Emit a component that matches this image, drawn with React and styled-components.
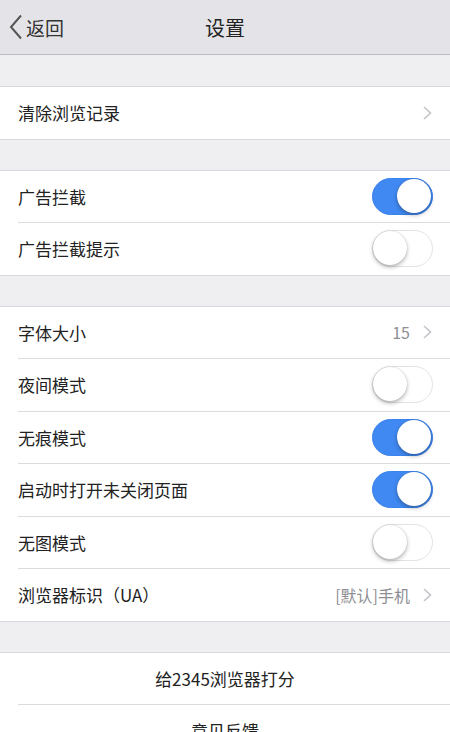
import styled, { createGlobalStyle } from "styled-components";

const GlobalStyle = createGlobalStyle`
  body {
    margin: 0;
    background: #efeff1;
    font-family: "Noto Sans CJK SC", "Liberation Sans", sans-serif;
  }
`;

const Page = styled.div`
  width: 450px;
  height: 732px;
  overflow: hidden;
  background: #efeff1;
`;

const NavBar = styled.div`
  height: 54px;
  display: grid;
  grid-template-columns: 1fr auto 1fr;
  align-items: center;
  background: #e4e4e8;
  border-bottom: 1px solid #bdbdc2;
`;

const Back = styled.div`
  display: flex;
  align-items: center;
  gap: 3px;
  padding-left: 9px;
  font-size: 19px;
  color: #333;
`;

const Title = styled.div`
  font-size: 20px;
  color: #222;
`;

const Group = styled.div`
  margin-top: ${(p) => (p.$first ? "31px" : "30px")};
  background: #fff;
  border-top: 1px solid #d9d9dd;
  border-bottom: 1px solid #d9d9dd;
`;

const Row = styled.div`
  height: 51.5px;
  margin-left: 18px;
  padding-right: 18px;
  display: flex;
  align-items: center;
  justify-content: ${(p) => (p.$center ? "center" : "space-between")};
  font-size: 17px;
  color: #222;

  &:not(:last-child) {
    border-bottom: 1px solid #dcdce0;
  }
`;

const Detail = styled.div`
  display: flex;
  align-items: center;
  gap: 13px;
  color: #8e8e93;
  font-size: 16px;
`;

const SwitchTrack = styled.div`
  position: relative;
  width: 61px;
  height: 37px;
  margin-right: -1px;
  border-radius: 19px;
  box-sizing: border-box;
  background: ${(p) => (p.$on ? "#4089f2" : "#fff")};
  border: 1.5px solid ${(p) => (p.$on ? "#3a82ec" : "#e3e3e6")};
`;

const Knob = styled.div`
  position: absolute;
  top: 0;
  left: ${(p) => (p.$on ? "24px" : "0")};
  width: 34px;
  height: 34px;
  border-radius: 50%;
  background: #fff;
  box-shadow: 0 2px 4px rgba(0, 0, 0, 0.3), 0 0 1px rgba(0, 0, 0, 0.2);
`;

function Switch({ on }) {
  return (
    <SwitchTrack $on={on}>
      <Knob $on={on} />
    </SwitchTrack>
  );
}

function Chevron() {
  return (
    <svg width="9" height="14" viewBox="0 0 9 14">
      <path d="M1 1 L7.5 7 L1 13" fill="none" stroke="#c4c4c9" strokeWidth="1.6" />
    </svg>
  );
}

function BackArrow() {
  return (
    <svg width="14" height="26" viewBox="0 0 14 26">
      <path d="M12 1.5 L2 13 L12 24.5" fill="none" stroke="#555" strokeWidth="2" />
    </svg>
  );
}

export default function App() {
  return (
    <Page>
      <GlobalStyle />
      <NavBar>
        <Back>
          <BackArrow />
          返回
        </Back>
        <Title>设置</Title>
        <div />
      </NavBar>

      <Group $first>
        <Row>
          清除浏览记录
          <Chevron />
        </Row>
      </Group>

      <Group>
        <Row>
          广告拦截
          <Switch on />
        </Row>
        <Row>
          广告拦截提示
          <Switch />
        </Row>
      </Group>

      <Group>
        <Row>
          字体大小
          <Detail>
            15
            <Chevron />
          </Detail>
        </Row>
        <Row>
          夜间模式
          <Switch />
        </Row>
        <Row>
          无痕模式
          <Switch on />
        </Row>
        <Row>
          启动时打开未关闭页面
          <Switch on />
        </Row>
        <Row>
          无图模式
          <Switch />
        </Row>
        <Row>
          浏览器标识（UA）
          <Detail>
            [默认]手机
            <Chevron />
          </Detail>
        </Row>
      </Group>

      <Group>
        <Row $center>给2345浏览器打分</Row>
        <Row $center>意见反馈</Row>
      </Group>
    </Page>
  );
}
